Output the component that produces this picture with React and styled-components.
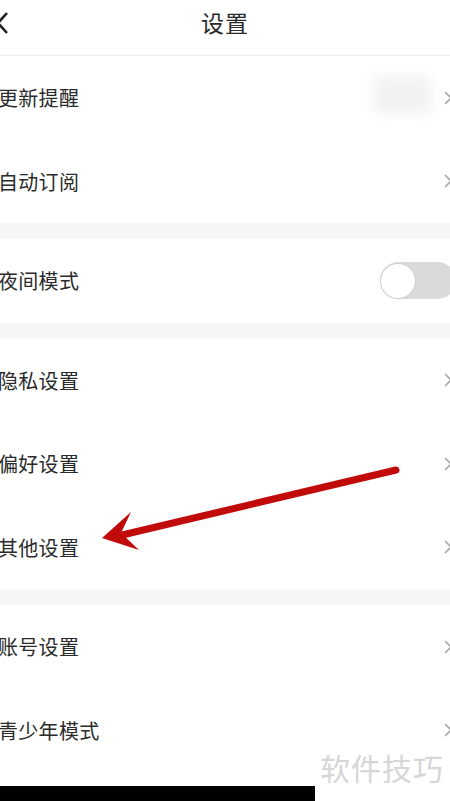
import React from "react";
import styled, { createGlobalStyle } from "styled-components";

const Global = createGlobalStyle`
  html, body { margin: 0; padding: 0; background: #fff; }
  body { font-family: "Noto Sans CJK SC", "Noto Sans", sans-serif; overflow: hidden; }
`;

const Page = styled.div`
  position: relative;
  width: 450px;
  height: 801px;
  overflow: hidden;
  background: #fff;
`;

const Header = styled.div`
  height: 55px;
  border-bottom: 1px solid #eeeeee;
  display: flex;
  align-items: center;
  justify-content: center;
  position: relative;
`;

const Back = styled.svg`
  position: absolute;
  left: -4px;
  top: 12px;
`;

const Title = styled.div`
  font-size: 23px;
  color: #2a2a2a;
  letter-spacing: 1px;
  margin-top: -11px;
`;

const Section = styled.div`
  background: #fff;
`;

const Band = styled.div`
  height: 16px;
  background: #f5f6f8;
`;

const Row = styled.div`
  height: 83.5px;
  display: flex;
  align-items: center;
  justify-content: space-between;
`;

const Label = styled.span`
  font-size: 20px;
  color: #2b2b2b;
  margin-left: -2px;
  letter-spacing: 0.3px;
`;

const Right = styled.div`
  display: flex;
  align-items: center;
  gap: 12px;
`;

const Blur = styled.div`
  width: 58px;
  height: 38px;
  margin-top: -6px;
  background: #efefef;
  filter: blur(6px);
  opacity: 0.8;
`;

const Chevron = styled.svg`
  margin-right: -3px;
  display: block;
`;

const Toggle = styled.div`
  width: 76px;
  height: 37px;
  border-radius: 19px;
  background: #dadada;
  margin-right: -6px;
  display: flex;
  align-items: center;
  padding-left: 1px;
  box-sizing: border-box;
`;

const Knob = styled.div`
  width: 34px;
  height: 34px;
  border-radius: 50%;
  background: #fff;
  box-shadow: 0 0 1px 1px #d0d0d0;
`;

const Bottom = styled.div`
  height: 14px;
`;

const BlackBar = styled.div`
  width: 315px;
  height: 15px;
  background: #000;
`;

const Watermark = styled.div`
  position: absolute;
  left: 320px;
  top: 745px;
  font-size: 30px;
  color: #d6d6d6;
  letter-spacing: 1px;
`;

const Arrow = styled.svg`
  position: absolute;
  left: 0;
  top: 0;
  pointer-events: none;
`;

const Chev = () => (
  <Chevron width="10" height="14" viewBox="0 0 10 14">
    <path d="M2 1 L8 7 L2 13" fill="none" stroke="#a8a8a8" strokeWidth="1.6" />
  </Chevron>
);

const Item = ({ label, blur, toggle }) => (
  <Row>
    <Label>{label}</Label>
    <Right>
      {blur && <Blur />}
      {toggle ? (
        <Toggle>
          <Knob />
        </Toggle>
      ) : (
        <Chev />
      )}
    </Right>
  </Row>
);

export default function App() {
  return (
    <Page>
      <Global />
      <Header>
        <Back width="14" height="22" viewBox="0 0 14 22">
          <path d="M11 1 L2 11 L11 21" fill="none" stroke="#222" strokeWidth="2.6" />
        </Back>
        <Title>设置</Title>
      </Header>
      <Section>
        <Item label="更新提醒" blur />
        <Item label="自动订阅" />
      </Section>
      <Band />
      <Section>
        <Item label="夜间模式" toggle />
      </Section>
      <Band />
      <Section>
        <Item label="隐私设置" />
        <Item label="偏好设置" />
        <Item label="其他设置" />
      </Section>
      <Band />
      <Section>
        <Item label="账号设置" />
        <Item label="青少年模式" />
      </Section>
      <Bottom />
      <BlackBar />
      <Watermark>软件技巧</Watermark>
      <Arrow width="450" height="801" viewBox="0 0 450 801">
        <line x1="396" y1="470" x2="118" y2="536" stroke="#c10a0a" strokeWidth="7" strokeLinecap="round" />
        <path d="M102 538 L131 512 L121 533 L139 550 Z" fill="#c10a0a" />
      </Arrow>
    </Page>
  );
}
